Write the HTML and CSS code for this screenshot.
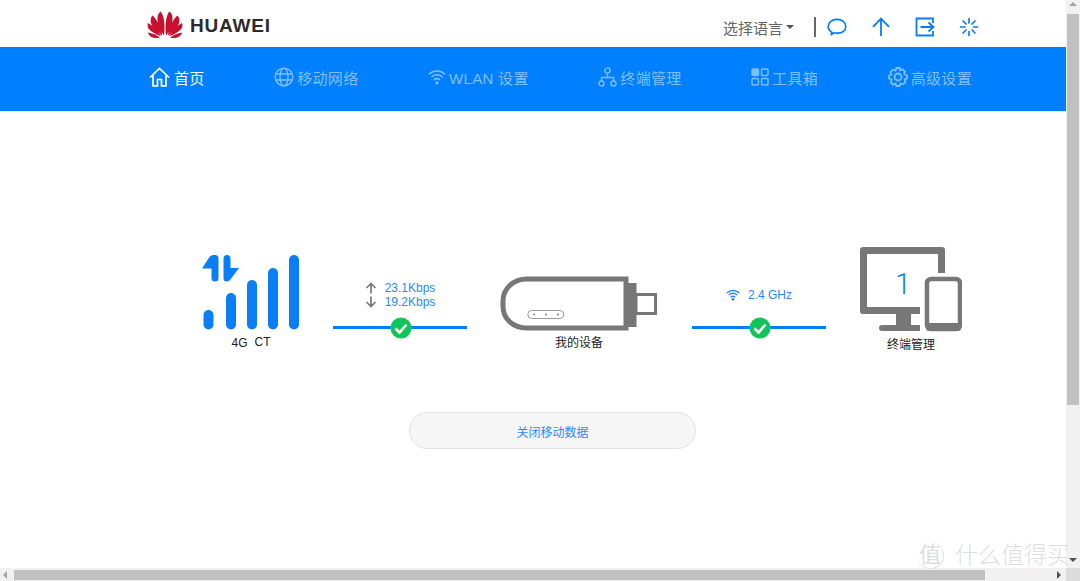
FILE: index.html
```html
<!DOCTYPE html>
<html lang="zh-CN">

<head>
    <meta charset="UTF-8">
    <meta name="viewport" content="width=device-width, initial-scale=1.0">
    <title>HUAWEI</title>
    <link rel="stylesheet" href="styles.css">
</head>

<body>
    <div class="window">
        <div class="page">
            <!-- Logo and tools -->
            <header class="topbar">
                <div class="logo">
                    <svg class="logo-mark" width="36" height="27" viewBox="0 0 36 27">
                        <g id="petals" fill="#c7102e">
                            <path d="M17 24.5C12.5 19 10 12 10.5 6.5 10.8 3.5 12 1.5 13.5.5 16.500 3 18.500 13 17 24.500Z" />
                            <path d="M15.200 24.500C9.500 20.500 4.800 15.500 3.800 11.500 3.300 8.500 4 6 5.500 4.500 9 7.500 14 15 15.200 24.500Z" />
                            <path d="M14 25.300C9 23.300 3.500 20.500 1.500 17.500.5 15.500.4 13.500.8 12 5 14 11 19.500 14 25.300Z" />
                            <path d="M13 26.800C9 27.500 5 27 3 25 2 24 1.200 22.800.8 21.500 5 22 9.500 24 13 26.800Z" />
                        </g>
                        <use href="#petals" transform="matrix(-1 0 0 1 36 0)" />
                    </svg>
                    <span class="logo-text">HUAWEI</span>
                </div>
                <div class="tools">
                    <span class="lang">选择语言<i class="caret"></i></span>
                    <i class="divider"></i>
                    <svg class="tool" width="20" height="20" viewBox="0 0 20 20" fill="none" stroke="#0a7cf5" stroke-width="1.7">
                        <path d="M5 15.5C2.5 14 1.2 12 1.2 9.6 1.2 5.5 5 2.4 10 2.4S18.8 5.5 18.8 9.6 15 16.2 10 16.2C8.8 16.2 7.8 16 7 15.8L3.6 18C4.4 17.2 4.9 16.4 5 15.5Z" />
                    </svg>
                    <svg class="tool" width="20" height="20" viewBox="0 0 20 20" fill="none" stroke="#0a7cf5" stroke-width="1.8">
                        <path d="M10 19V2M2 9.8 10 1.6 18 9.8" />
                    </svg>
                    <svg class="tool" width="20" height="20" viewBox="0 0 20 20" fill="none" stroke="#0a7cf5" stroke-width="1.8">
                        <path d="M18 6V1.5H1.500V18.500H18V14M5.500 10H18M13.500 5.500 18.500 10 13.500 14.500" />
                    </svg>
                    <svg class="tool" width="20" height="20" viewBox="0 0 20 20" fill="none" stroke="#0a7cf5" stroke-width="1.7" stroke-linecap="round">
                        <path d="M10 1.500V6M10 14.500V18.500M1.500 10H6M14.500 10H18.500M4 4 7 7M13 13 16 16M16 4 13 7M7 13 4 16" />
                    </svg>
                </div>
            </header>

            <!-- Main menu -->
            <nav class="menu">
                <a class="menu-item active" href="#">
                    <svg width="21" height="20" viewBox="0 0 21 20" fill="none" stroke="currentColor" stroke-width="1.7">
                        <path d="M1 10.500 10.500 1.500 20 10.500M4 8V18.800H8.500V12.500H12.500V18.800H17V8" />
                    </svg>首页
                </a>
                <a class="menu-item" href="#">
                    <svg width="20" height="20" viewBox="0 0 20 20" fill="none" stroke="currentColor" stroke-width="1.4">
                        <circle cx="10" cy="10" r="8.800" />
                        <ellipse cx="10" cy="10" rx="4" ry="8.800" />
                        <path d="M1.500 7H18.500M1.500 13H18.500" />
                    </svg>移动网络
                </a>
                <a class="menu-item" href="#">
                    <svg width="18" height="16" viewBox="0 0 18 16" fill="none" stroke="currentColor" stroke-width="1.5">
                        <path d="M.8 5.200C5.500 1 12.500 1 17.200 5.200M3.500 8C6.800 5.300 11.200 5.300 14.500 8M6 10.800C7.800 9.400 10.200 9.400 12 10.800" />
                        <circle cx="9" cy="13.800" r="1.600" fill="currentColor" stroke="none" />
                    </svg>WLAN 设置
                </a>
                <a class="menu-item" href="#">
                    <svg width="19" height="20" viewBox="0 0 19 20" fill="none" stroke="currentColor" stroke-width="1.4">
                        <circle cx="9.500" cy="3.500" r="2.600" />
                        <rect x="1" y="14" width="5" height="5" rx="2.500" />
                        <rect x="13" y="14" width="5" height="5" rx="2.500" />
                        <path d="M9.500 6V10M3.500 14V10.500H15.500V14" />
                    </svg>终端管理
                </a>
                <a class="menu-item" href="#">
                    <svg width="18" height="18" viewBox="0 0 18 18" fill="none" stroke="currentColor" stroke-width="1.4">
                        <rect x="1" y="1" width="6.500" height="6.500" rx="1" fill="currentColor" />
                        <rect x="10.500" y="1" width="6.500" height="6.500" rx="1" />
                        <rect x="1" y="10.500" width="6.500" height="6.500" rx="1" />
                        <rect x="10.500" y="10.500" width="6.500" height="6.500" rx="1" />
                    </svg>工具箱
                </a>
                <a class="menu-item" href="#">
                    <svg width="20" height="20" viewBox="0 0 20 20" fill="none" stroke="currentColor" stroke-width="1.8">
                        <path d="M8.500 1H11.500L12.200 3.300 14.600 2.300 17 4.500 16.200 6.900 19 8.500V11.500L16.700 12.500 17.600 15 15.200 17.300 12.800 16.500 11.500 19H8.500L7.500 16.700 5 17.600 2.800 15.300 3.700 12.800 1 11.500V8.500L3.400 7.500 2.500 5 4.800 2.700 7.300 3.600Z" />
                        <circle cx="10" cy="10" r="3.500" />
                    </svg>高级设置
                </a>
            </nav>

            <!-- Connection diagram -->
            <main class="stage">
                <div class="diagram">
                    <div class="node node-signal">
                        <svg width="100" height="76" viewBox="0 0 100 76" fill="#0a7ff5">
                            <path d="M2 14.500 9.500 3Q11 1 13.500 1H15Q18.500 1 18.500 4.500V24Q18.500 27.500 15 27.500 11.500 27.500 11.500 24V14.500Z" />
                            <path d="M23.500 4.500Q23.500 1 27 1 30.500 1 30.500 4.500V14H39L30 26Q28.500 27.500 26.500 27.500 23.500 27.500 23.500 24Z" />
                            <rect x="3.500" y="56" width="10" height="19.500" rx="5" />
                            <rect x="26" y="39" width="10" height="36.500" rx="5" />
                            <rect x="47" y="26" width="10" height="49.500" rx="5" />
                            <rect x="68" y="14" width="10" height="61.500" rx="5" />
                            <rect x="89" y="1" width="10" height="74.500" rx="5" />
                        </svg>
                        <div class="label label-carrier"><span>4G</span><span class="carrier">CT</span></div>
                    </div>

                    <div class="link link-speed">
                        <div class="link-info">
                            <div class="speed">
                                <svg width="12" height="12" viewBox="0 0 12 12" fill="none" stroke="#777" stroke-width="1.7">
                                    <path d="M6 11.500V1.500M1.500 6 6 1.500 10.500 6" />
                                </svg>
                                <span>23.1Kbps</span>
                            </div>
                            <div class="speed">
                                <svg width="12" height="12" viewBox="0 0 12 12" fill="none" stroke="#777" stroke-width="1.7">
                                    <path d="M6 .5V10.500M1.500 6 6 10.500 10.500 6" />
                                </svg>
                                <span>19.2Kbps</span>
                            </div>
                        </div>
                        <div class="link-line">
                            <svg class="check" width="22" height="22" viewBox="0 0 22 22">
                                <circle cx="11" cy="11" r="10.500" fill="#10c45a" />
                                <path d="M5.500 11.500 9.500 15.500 16.500 7.500" fill="none" stroke="#fff" stroke-width="2.600" />
                            </svg>
                        </div>
                    </div>

                    <div class="node node-device">
                        <svg width="158" height="55" viewBox="0 0 158 55">
                            <path d="M126 3H27C13 3 3 13 3 25V30C3 43 13 52 27 52H126Z" fill="none" stroke="#777" stroke-width="5" />
                            <rect x="124.500" y="7" width="12" height="44" fill="#777" />
                            <rect x="136" y="18.500" width="19.500" height="19" fill="none" stroke="#777" stroke-width="3" />
                            <rect x="27.800" y="34.500" width="36" height="8" rx="4" fill="none" stroke="#999" />
                            <g fill="#777">
                                <circle cx="34" cy="38.500" r=".9" />
                                <circle cx="46" cy="38.500" r=".9" />
                                <circle cx="58" cy="38.500" r=".9" />
                            </g>
                        </svg>
                        <div class="label">我的设备</div>
                    </div>

                    <div class="link link-wifi">
                        <div class="link-info">
                            <div class="speed">
                                <svg width="14" height="12" viewBox="0 0 18 16" fill="none" stroke="#2d87ff" stroke-width="2">
                                    <path d="M.8 5.200C5.500 1 12.500 1 17.200 5.200M3.500 8C6.800 5.300 11.200 5.300 14.500 8M6 10.800C7.800 9.400 10.200 9.400 12 10.800" />
                                    <circle cx="9" cy="13.800" r="1.800" fill="#2d87ff" stroke="none" />
                                </svg>
                                <span>2.4 GHz</span>
                            </div>
                        </div>
                        <div class="link-line">
                            <svg class="check" width="22" height="22" viewBox="0 0 22 22">
                                <circle cx="11" cy="11" r="10.500" fill="#10c45a" />
                                <path d="M5.500 11.500 9.500 15.500 16.500 7.500" fill="none" stroke="#fff" stroke-width="2.600" />
                            </svg>
                        </div>
                    </div>

                    <div class="node node-terminal">
                        <div class="screens">
                            <svg width="102" height="85" viewBox="0 0 102 85">
                                <path d="M3 0H82Q85 0 85 3V26H78V7H7V60H60V67H51V78H60V84H22Q19 84 19 81 19 78 22 78H36V67H3Q0 67 0 64V3Q0 0 3 0Z" fill="#777" />
                                <rect x="67" y="32" width="33" height="50" rx="4" fill="none" stroke="#777" stroke-width="4.500" />
                                <rect x="66" y="76" width="35" height="8" rx="3" fill="#777" />
                            </svg>
                            <span class="count">1</span>
                        </div>
                        <div class="label">终端管理</div>
                    </div>
                </div>

                <div class="actions">
                    <button class="data-btn">关闭移动数据</button>
                </div>
            </main>
        </div>

        <!-- Scrollbars -->
        <div class="vbar">
            <i class="arrow arrow-up"></i>
            <div class="vthumb"></div>
            <i class="arrow arrow-down"></i>
        </div>
        <div class="hbar">
            <i class="arrow arrow-left"></i>
            <div class="hthumb"></div>
            <i class="arrow arrow-right"></i>
        </div>
        <div class="corner"></div>

        <div class="watermark">
            <span class="wm-seal">值</span>
            <span class="wm-name">什么值得买</span>
        </div>
    </div>
</body>

</html>
```

FILE: styles.css
```css
* {
    box-sizing: border-box;
}

html,
body {
    margin: 0;
    height: 100%;
    overflow: hidden;
}

body {
    font-family: "Liberation Sans", "Noto Sans CJK SC", sans-serif;
    background-color: #fff;
}

.window {
    position: relative;
    display: grid;
    grid-template-columns: 1fr 14px;
    grid-template-rows: 568px 13px;
    width: 1080px;
    height: 581px;
    overflow: hidden;
}

.page {
    overflow: hidden;
}

/* Top bar */
.topbar {
    display: flex;
    align-items: center;
    justify-content: space-between;
    height: 47px;
    padding: 0 87px 0 147px;
}

.logo {
    display: flex;
    align-items: center;
    gap: 7px;
    margin-top: 2px;
}

.logo-mark {
    display: block;
}

.logo-text {
    margin-top: 3px;
    font-size: 19px;
    font-weight: bold;
    letter-spacing: .8px;
    color: #2b2b2b;
}

.tools {
    display: flex;
    align-items: center;
    margin-top: 7px;
}

.lang {
    display: flex;
    align-items: center;
    font-size: 15px;
    color: #666;
}

.caret {
    width: 0;
    height: 0;
    margin-left: 3px;
    border-left: 4px solid transparent;
    border-right: 4px solid transparent;
    border-top: 4px solid #555;
}

.divider {
    width: 2px;
    height: 20px;
    margin: 0 11px 0 20px;
    background-color: #666;
}

.tool {
    display: block;
    margin-right: 24px;
}

.tool:last-child {
    margin-right: 0;
}

/* Menu */
.menu {
    display: flex;
    align-items: center;
    justify-content: space-between;
    height: 64px;
    padding: 0 94px 4px 149px;
    background-color: #007fff;
}

.menu-item {
    display: flex;
    align-items: center;
    gap: 3px;
    font-size: 15px;
    letter-spacing: .3px;
    color: #80bfff;
    text-decoration: none;
    white-space: nowrap;
}

.menu-item.active {
    gap: 4px;
    color: #fff;
}

.menu-item svg {
    display: block;
    flex: none;
}

/* Diagram */
.stage {
    padding-top: 136px;
    box-shadow: inset 0 1px 1px #e4e4e4;
}

.diagram {
    display: flex;
    align-items: flex-start;
    gap: 33px;
    height: 105px;
    padding-left: 200px;
}

.node svg {
    display: block;
}

.node-signal {
    margin-top: 7px;
}

.node-device {
    margin-top: 29px;
}

.node-terminal {
    margin-left: 1px;
}

.label {
    margin-top: 4px;
    font-size: 12px;
    line-height: 16px;
    text-align: center;
    color: #222;
}

.label-carrier {
    display: flex;
    justify-content: center;
    gap: 7px;
    margin-top: 5px;
    padding-left: 2px;
}

.carrier {
    margin-top: -1px;
}

.node-terminal .label {
    margin-top: 5px;
}

.link {
    width: 134px;
    margin-top: 34px;
}

.link-wifi {
    margin-left: 1px;
}

.link-info {
    display: flex;
    flex-direction: column;
    align-items: center;
    height: 45px;
}

.link-wifi .link-info {
    padding-top: 7px;
}

.speed {
    display: flex;
    align-items: center;
    gap: 8px;
    height: 14px;
    font-size: 12px;
    color: #2d87ff;
}

.link-line {
    position: relative;
    height: 3px;
    background-color: #007fff;
}

.check {
    position: absolute;
    left: 57px;
    top: -9px;
}

.screens {
    position: relative;
}

.count {
    position: absolute;
    left: 35px;
    top: 20px;
    font-family: Roboto, "Liberation Sans", sans-serif;
    font-size: 29px;
    font-weight: 300;
    line-height: 34px;
    color: #0a7ff5;
}

/* Button */
.actions {
    margin-top: 60px;
    padding-left: 409px;
}

.data-btn {
    width: 287px;
    height: 37px;
    padding: 1px 0 0;
    border: 1px solid #e2e2e2;
    border-radius: 19px;
    background-color: #f6f6f6;
    font-family: inherit;
    font-size: 12px;
    color: #2d87ff;
}

/* Scrollbars */
.vbar {
    display: flex;
    flex-direction: column;
    align-items: center;
    background-color: #f1f1f1;
}

.vthumb {
    width: 12px;
    height: 391px;
    margin-top: 8px;
    background-color: #c1c1c1;
}

.hbar {
    display: flex;
    align-items: center;
    padding: 0 5px 0 3px;
    background-color: #f1f1f1;
}

.hthumb {
    width: 971px;
    height: 10px;
    margin-left: 7px;
    background-color: #c1c1c1;
}

.corner {
    background-color: #dcdcdc;
}

.arrow {
    flex: none;
    width: 0;
    height: 0;
    border: 4px solid transparent;
}

.arrow-up {
    margin-top: 2px;
    border-top-width: 0;
    border-bottom-color: #a3a3a3;
}

.arrow-down {
    margin-top: auto;
    margin-bottom: 6px;
    border-bottom-width: 0;
    border-top-color: #505050;
}

.arrow-left {
    border-left-width: 0;
    border-right-color: #a3a3a3;
}

.arrow-right {
    margin-left: auto;
    border-right-width: 0;
    border-left-color: #505050;
}

/* Site watermark */
.watermark {
    position: absolute;
    right: 10px;
    bottom: 12px;
    display: flex;
    align-items: center;
    gap: 11px;
    color: #dedede;
    text-shadow: 0 0 1px #fff;
}

.wm-seal {
    width: 27px;
    height: 27px;
    border-right: 1px solid #e0e0e0;
    border-bottom: 1px solid #e0e0e0;
    border-radius: 50%;
    font-size: 22px;
    line-height: 26px;
    text-align: center;
}

.wm-name {
    font-size: 23px;
    font-weight: 300;
    line-height: 28px;
}
```
